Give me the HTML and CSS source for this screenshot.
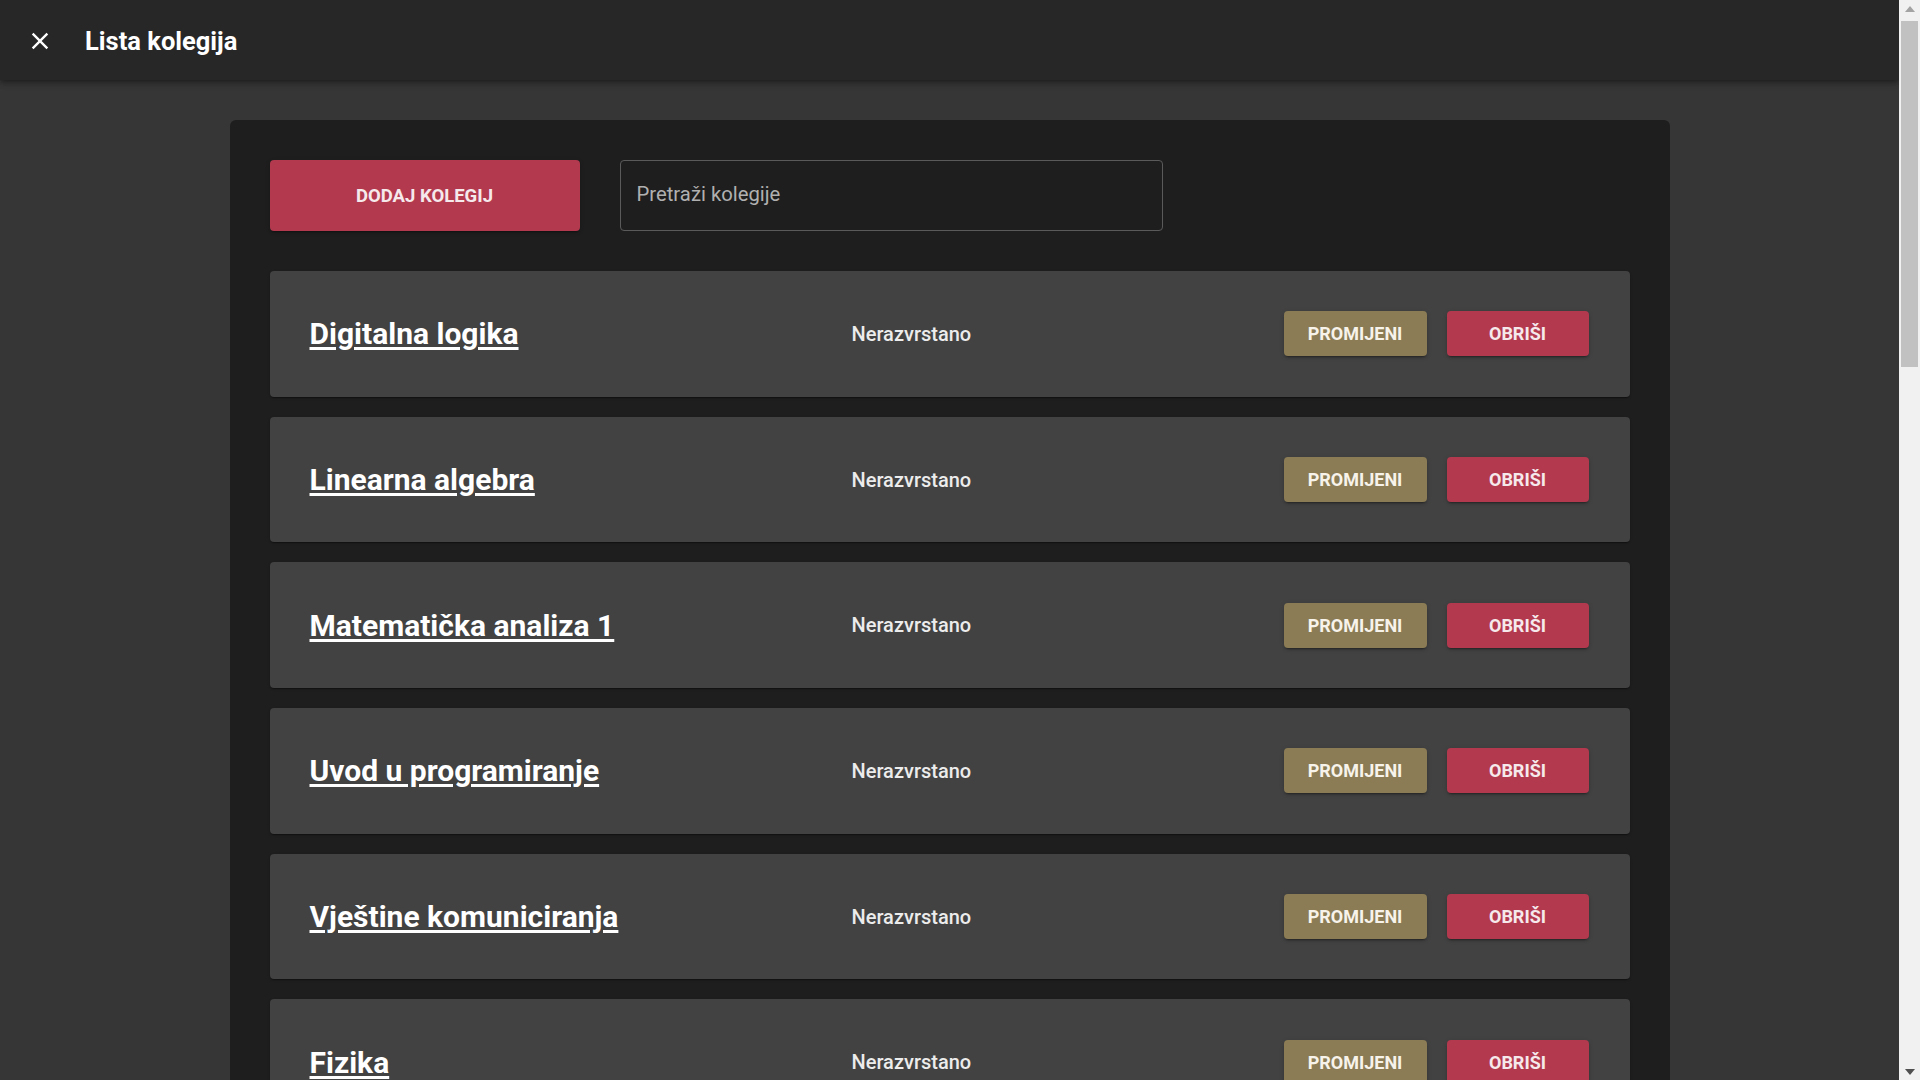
FILE: index.html
```html
<!DOCTYPE html>
<html lang="hr">
<head>
<meta charset="utf-8">
<title>Lista kolegija</title>
<link rel="stylesheet" href="styles.css">
</head>
<body>
<header class="appbar">
  <button class="close-btn" aria-label="Zatvori">
    <svg viewBox="0 0 24 24" width="28" height="28"><path fill="#ffffff" d="M19,6.41L17.59,5L12,10.59L6.41,5L5,6.41L10.59,12L5,17.59L6.41,19L12,13.41L17.59,19L19,17.59L13.41,12L19,6.41Z"/></svg>
  </button>
  <div class="appbar-title">Lista kolegija</div>
</header>
<main class="page">
  <section class="panel">
    <div class="toolbar">
      <button class="btn btn-red btn-add">DODAJ KOLEGIJ</button>
      <div class="search"><input type="text" placeholder="Pretraži kolegije"></div>
    </div>
    <div class="list">
      <div class="row"><a class="title" href="#">Digitalna logika</a><span class="cat">Nerazvrstano</span><div class="actions"><button class="btn btn-gold">PROMIJENI</button><button class="btn btn-red">OBRIŠI</button></div></div>
      <div class="row"><a class="title" href="#">Linearna algebra</a><span class="cat">Nerazvrstano</span><div class="actions"><button class="btn btn-gold">PROMIJENI</button><button class="btn btn-red">OBRIŠI</button></div></div>
      <div class="row"><a class="title" href="#">Matematička analiza 1</a><span class="cat">Nerazvrstano</span><div class="actions"><button class="btn btn-gold">PROMIJENI</button><button class="btn btn-red">OBRIŠI</button></div></div>
      <div class="row"><a class="title" href="#">Uvod u programiranje</a><span class="cat">Nerazvrstano</span><div class="actions"><button class="btn btn-gold">PROMIJENI</button><button class="btn btn-red">OBRIŠI</button></div></div>
      <div class="row"><a class="title" href="#">Vještine komuniciranja</a><span class="cat">Nerazvrstano</span><div class="actions"><button class="btn btn-gold">PROMIJENI</button><button class="btn btn-red">OBRIŠI</button></div></div>
      <div class="row"><a class="title" href="#">Fizika</a><span class="cat">Nerazvrstano</span><div class="actions"><button class="btn btn-gold">PROMIJENI</button><button class="btn btn-red">OBRIŠI</button></div></div>
      <div class="row"><a class="title" href="#">Matematička analiza 2</a><span class="cat">Nerazvrstano</span><div class="actions"><button class="btn btn-gold">PROMIJENI</button><button class="btn btn-red">OBRIŠI</button></div></div>
      <div class="row"><a class="title" href="#">Objektno orijentirano programiranje</a><span class="cat">Nerazvrstano</span><div class="actions"><button class="btn btn-gold">PROMIJENI</button><button class="btn btn-red">OBRIŠI</button></div></div>
      <div class="row"><a class="title" href="#">Algoritmi i strukture podataka</a><span class="cat">Nerazvrstano</span><div class="actions"><button class="btn btn-gold">PROMIJENI</button><button class="btn btn-red">OBRIŠI</button></div></div>
      <div class="row"><a class="title" href="#">Operacijski sustavi</a><span class="cat">Nerazvrstano</span><div class="actions"><button class="btn btn-gold">PROMIJENI</button><button class="btn btn-red">OBRIŠI</button></div></div>
      <div class="row"><a class="title" href="#">Baze podataka</a><span class="cat">Nerazvrstano</span><div class="actions"><button class="btn btn-gold">PROMIJENI</button><button class="btn btn-red">OBRIŠI</button></div></div>
      <div class="row"><a class="title" href="#">Računalne mreže</a><span class="cat">Nerazvrstano</span><div class="actions"><button class="btn btn-gold">PROMIJENI</button><button class="btn btn-red">OBRIŠI</button></div></div>
      <div class="row"><a class="title" href="#">Elektrotehnika</a><span class="cat">Nerazvrstano</span><div class="actions"><button class="btn btn-gold">PROMIJENI</button><button class="btn btn-red">OBRIŠI</button></div></div>
      <div class="row"><a class="title" href="#">Vjerojatnost i statistika</a><span class="cat">Nerazvrstano</span><div class="actions"><button class="btn btn-gold">PROMIJENI</button><button class="btn btn-red">OBRIŠI</button></div></div>
      <div class="row"><a class="title" href="#">Diskretna matematika</a><span class="cat">Nerazvrstano</span><div class="actions"><button class="btn btn-gold">PROMIJENI</button><button class="btn btn-red">OBRIŠI</button></div></div>
      <div class="row"><a class="title" href="#">Arhitektura računala</a><span class="cat">Nerazvrstano</span><div class="actions"><button class="btn btn-gold">PROMIJENI</button><button class="btn btn-red">OBRIŠI</button></div></div>
      <div class="row"><a class="title" href="#">Web programiranje</a><span class="cat">Nerazvrstano</span><div class="actions"><button class="btn btn-gold">PROMIJENI</button><button class="btn btn-red">OBRIŠI</button></div></div>
      <div class="row"><a class="title" href="#">Programsko inženjerstvo</a><span class="cat">Nerazvrstano</span><div class="actions"><button class="btn btn-gold">PROMIJENI</button><button class="btn btn-red">OBRIŠI</button></div></div>
      <div class="row"><a class="title" href="#">Engleski jezik</a><span class="cat">Nerazvrstano</span><div class="actions"><button class="btn btn-gold">PROMIJENI</button><button class="btn btn-red">OBRIŠI</button></div></div>
      <div class="row"><a class="title" href="#">Signali i sustavi</a><span class="cat">Nerazvrstano</span><div class="actions"><button class="btn btn-gold">PROMIJENI</button><button class="btn btn-red">OBRIŠI</button></div></div>
    </div>
  </section>
</main>
<aside class="scrollbar" aria-hidden="true">
  <div class="sb-arrow"><svg width="10" height="6" viewBox="0 0 10 6"><path d="M0 6 L5 0 L10 6 Z" fill="#a3a3a3"/></svg></div>
  <div class="sb-track"><div class="sb-thumb"></div></div>
  <div class="sb-arrow"><svg width="10" height="6" viewBox="0 0 10 6"><path d="M0 0 L5 6 L10 0 Z" fill="#505050"/></svg></div>
</aside>
</body>
</html>
```

FILE: styles.css
```css
html, body {
  margin: 0;
  padding: 0;
}
body {
  background: #363636;
  font-family: Roboto, "Liberation Sans", Arial, sans-serif;
  color: #ffffff;
  padding-right: 21px;
}
.appbar {
  position: sticky;
  top: 0;
  z-index: 5;
  height: 80px;
  background: #272727;
  display: flex;
  align-items: center;
  box-shadow: 0 2px 4px -1px rgba(0,0,0,.25), 0 4px 5px 0 rgba(0,0,0,.16), 0 1px 10px 0 rgba(0,0,0,.14);
}
.close-btn {
  width: 28px;
  height: 28px;
  margin-left: 26px;
  margin-top: 2px;
  padding: 0;
  border: 0;
  background: transparent;
  display: flex;
  align-items: center;
  justify-content: center;
  cursor: pointer;
}
.close-btn svg { display: block; }
.appbar-title {
  margin-left: 31px;
  margin-top: 2px;
  font-size: 25.5px;
  font-weight: 700;
  color: #ffffff;
  letter-spacing: 0;
}
.page {
  padding: 40px 0;
  display: flex;
  justify-content: center;
}
.panel {
  width: 1440px;
  box-sizing: border-box;
  padding: 40px;
  background: #1e1e1e;
  border-radius: 6px;
}
.toolbar {
  display: flex;
  gap: 40px;
  margin-bottom: 40px;
}
.btn {
  border: 0;
  border-radius: 4px;
  color: #ffffff;
  font-family: Roboto, "Liberation Sans", Arial, sans-serif;
  font-weight: 700;
  font-size: 18px;
  letter-spacing: 0;
  cursor: pointer;
  box-shadow: 0 3px 1px -2px rgba(0,0,0,.2), 0 2px 2px 0 rgba(0,0,0,.14), 0 1px 5px 0 rgba(0,0,0,.12);
}
.btn-red { background: #b3394f; color: #f6e9ec; }
.btn-gold { background: #8b7c55; color: #f7f3ea; }
.btn-add {
  width: 310px;
  height: 71px;
  font-size: 18.5px;
}
.search {
  width: 543px;
  height: 71px;
  box-sizing: border-box;
  border: 1px solid #5a5a5a;
  border-radius: 4px;
  display: flex;
  align-items: center;
  padding: 0 16px 3px;
}
.search input {
  width: 100%;
  border: 0;
  outline: 0;
  background: transparent;
  color: #e0e0e0;
  font-family: Roboto, "Liberation Sans", Arial, sans-serif;
  font-size: 20.3px;
  padding: 0;
}
.search input::placeholder { color: #b0b0b0; }
.list {
  display: flex;
  flex-direction: column;
  gap: 20px;
}
.row {
  height: 125.7px;
  box-sizing: border-box;
  background: #424242;
  border-radius: 4px;
  padding: 0 41px 0 40px;
  display: grid;
  grid-template-columns: 542px 1fr auto;
  align-items: center;
  box-shadow: 0 2px 1px -1px rgba(0,0,0,.2), 0 1px 1px 0 rgba(0,0,0,.14), 0 1px 3px 0 rgba(0,0,0,.12);
}
.title {
  justify-self: start;
  color: #ffffff;
  font-size: 30px;
  font-weight: 700;
  text-decoration: underline;
  text-decoration-thickness: 3px;
  text-underline-offset: 3px;
}
.cat {
  font-size: 20px;
  font-weight: 500;
  color: #ececec;
}
.actions {
  display: flex;
  gap: 20px;
}
.actions .btn {
  height: 45px;
}
.actions .btn-gold { width: 143px; }
.actions .btn-red { width: 142px; }
.scrollbar {
  position: fixed;
  top: 0;
  right: 0;
  bottom: 0;
  width: 21px;
  background: #f1f1f1;
  display: flex;
  flex-direction: column;
  z-index: 10;
}
.sb-arrow {
  height: 17px;
  display: flex;
  align-items: center;
  justify-content: center;
  padding-left: 1px;
}
.sb-track {
  flex: 1;
  padding: 4px 2px 0 2px;
}
.sb-thumb {
  height: 346px;
  background: #c1c1c1;
}
```
